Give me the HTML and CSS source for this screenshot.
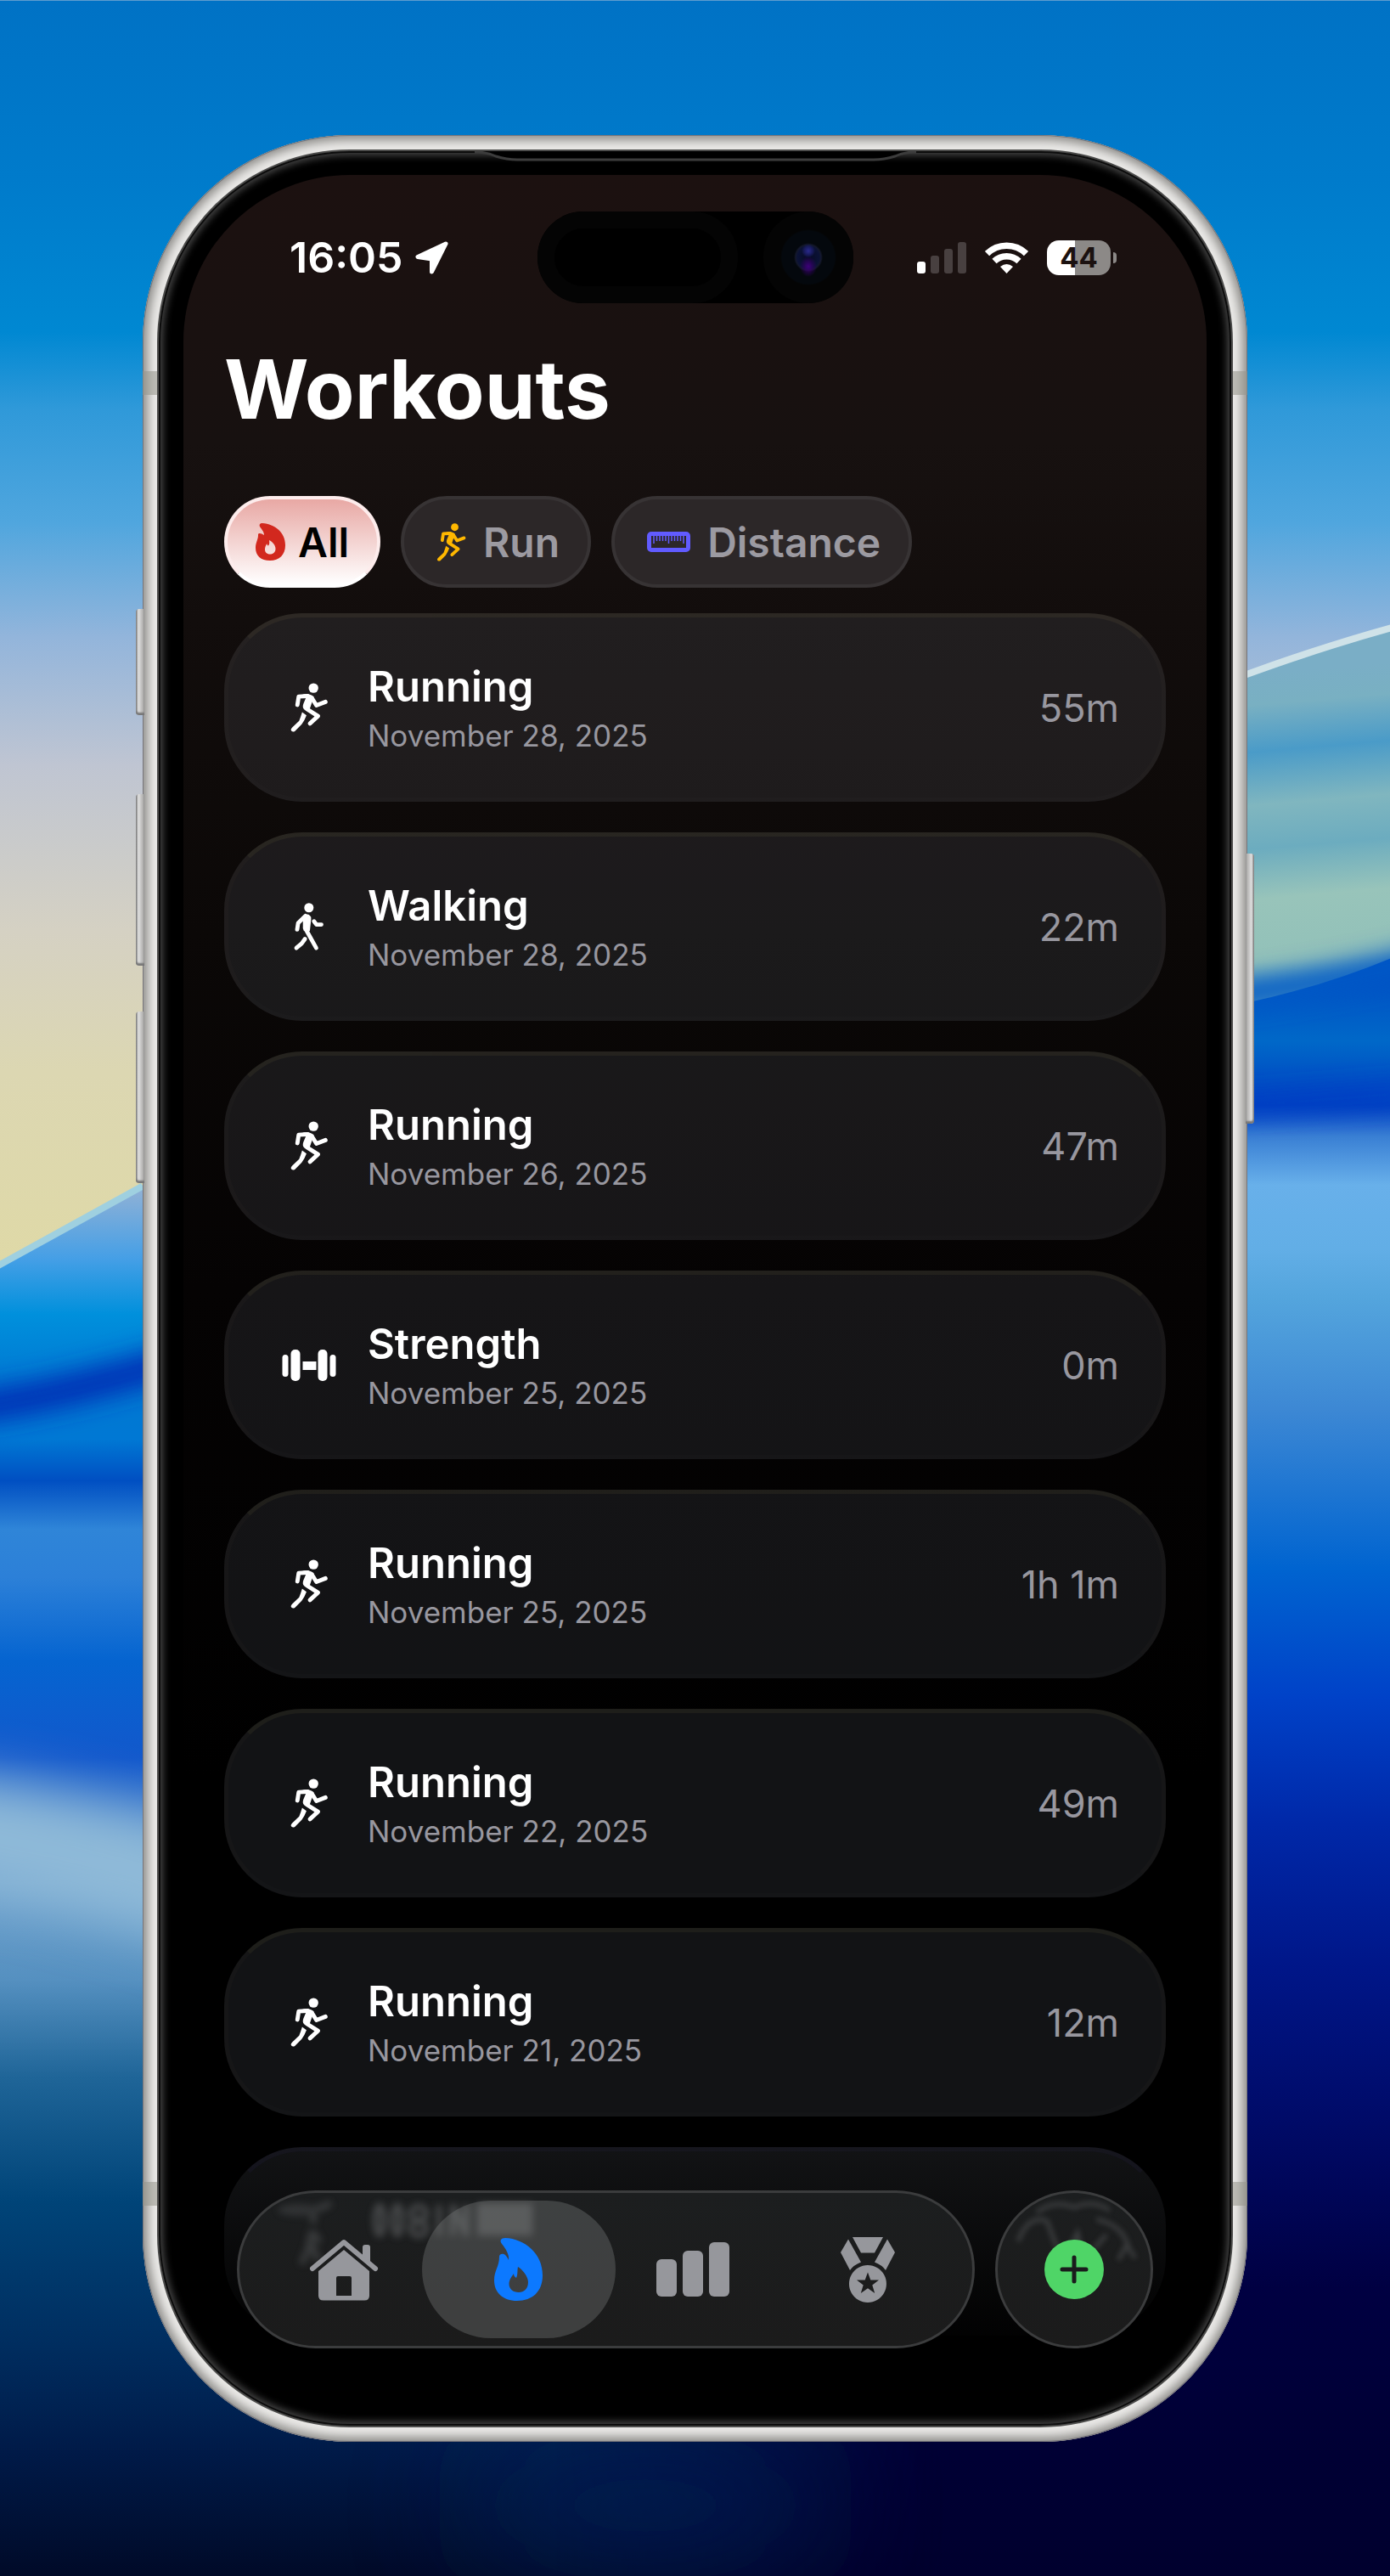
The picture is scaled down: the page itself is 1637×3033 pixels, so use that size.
FILE: index.html
```html
<!DOCTYPE html>
<html lang="en">
<head>
<meta charset="utf-8">
<meta name="viewport" content="width=device-width, initial-scale=1">
<title>Workouts</title>
<link rel="stylesheet" href="styles.css">
</head>
<body>
<svg class="wallpaper" viewBox="0 0 1637 3033" preserveAspectRatio="none" aria-hidden="true">
  <defs>
    <linearGradient id="sky" gradientUnits="userSpaceOnUse" x1="0" y1="0" x2="0" y2="1500">
      <stop offset="0" stop-color="#0072c5"/><stop offset=".14" stop-color="#007bcb"/><stop offset=".26" stop-color="#0088d2"/>
      <stop offset=".32" stop-color="#2f99d9"/><stop offset=".41" stop-color="#50a6de"/><stop offset=".5" stop-color="#93b5db"/>
      <stop offset=".6" stop-color="#bfc5d2"/><stop offset=".73" stop-color="#d5d1c3"/><stop offset=".84" stop-color="#dcd7b2"/><stop offset="1" stop-color="#dfd9a6"/>
    </linearGradient>
    <linearGradient id="seaLeft" gradientUnits="userSpaceOnUse" x1="0" y1="1400" x2="0" y2="3033">
      <stop offset="0" stop-color="#8fb1d6"/><stop offset=".05" stop-color="#459fe6"/><stop offset=".09" stop-color="#0090dc"/>
      <stop offset=".14" stop-color="#0078d2"/><stop offset=".18" stop-color="#0078d4"/><stop offset=".21" stop-color="#004fc2"/>
      <stop offset=".245" stop-color="#2f85d8"/><stop offset=".28" stop-color="#2c80d8"/><stop offset=".34" stop-color="#0564d0"/>
      <stop offset=".41" stop-color="#1258cc"/><stop offset=".5" stop-color="#6fa2ce"/><stop offset=".57" stop-color="#5590c0"/><stop offset=".64" stop-color="#1f6598"/>
      <stop offset=".73" stop-color="#004478"/><stop offset=".83" stop-color="#002e60"/><stop offset=".91" stop-color="#001a48"/><stop offset="1" stop-color="#000a28"/>
    </linearGradient>
    <linearGradient id="seaRight" gradientUnits="userSpaceOnUse" x1="0" y1="1150" x2="0" y2="3033">
      <stop offset="0" stop-color="#0050c4"/><stop offset=".04" stop-color="#0068c8"/><stop offset=".08" stop-color="#0040c2"/>
      <stop offset=".1" stop-color="#3a80d4"/><stop offset=".13" stop-color="#68b0ea"/><stop offset=".17" stop-color="#62aee6"/>
      <stop offset=".2" stop-color="#54a5dd"/><stop offset=".27" stop-color="#3d88d4"/><stop offset=".37" stop-color="#0064d0"/>
      <stop offset=".45" stop-color="#0042c8"/><stop offset=".53" stop-color="#0028a8"/><stop offset=".62" stop-color="#001688"/>
      <stop offset=".72" stop-color="#000a66"/><stop offset=".82" stop-color="#000042"/><stop offset=".9" stop-color="#000036"/><stop offset="1" stop-color="#00002e"/>
    </linearGradient>
    <linearGradient id="dune" gradientUnits="userSpaceOnUse" x1="1469" y1="793" x2="1500" y2="1160">
      <stop offset="0" stop-color="#7aaec6"/><stop offset=".1" stop-color="#79b0c2"/><stop offset=".25" stop-color="#4a9bc8"/>
      <stop offset=".42" stop-color="#80b6bf"/><stop offset=".56" stop-color="#6cacbf"/><stop offset=".72" stop-color="#98c4ba"/>
      <stop offset=".92" stop-color="#92c1b9"/><stop offset="1" stop-color="#6fb0bf"/>
    </linearGradient>
    <linearGradient id="fadeX" x1="0" x2="1" y1="0" y2="0">
      <stop offset=".4" stop-color="#000"/><stop offset=".68" stop-color="#fff"/>
    </linearGradient>
    <mask id="rightSide" maskUnits="userSpaceOnUse" x="0" y="0" width="1637" height="3033"><rect width="1637" height="3033" fill="url(#fadeX)"/></mask>
    <filter id="soft" filterUnits="userSpaceOnUse" x="-200" y="900" width="2100" height="1000"><feGaussianBlur stdDeviation="14"/></filter>
    <filter id="softer" filterUnits="userSpaceOnUse" x="-300" y="1700" width="2200" height="1500"><feGaussianBlur stdDeviation="32"/></filter>
    <filter id="haze" filterUnits="userSpaceOnUse" x="0" y="2400" width="1637" height="900"><feGaussianBlur stdDeviation="70"/></filter>
  </defs>
  <rect width="1637" height="3033" fill="url(#sky)"/>
  <path d="M0 1490L168 1395L800 1100H1637V3033H0Z" fill="url(#seaLeft)"/>
  <path d="M-60 1660Q60 1650 260 1585" fill="none" stroke="#0030b6" stroke-width="38" filter="url(#soft)"/>
  <path d="M-100 2150Q80 2170 320 2250" fill="none" stroke="#8fbad8" stroke-width="130" filter="url(#softer)"/>
  <path d="M-10 1494L168 1396" stroke="#9fd0e0" stroke-width="8"/>
  <path d="M1000 600H1637V1150H1000Z" fill="url(#sky)"/>
  <path d="M1000 960L1469 793Q1560 760 1637 738V1300H1000Z" fill="url(#dune)"/>
  <g mask="url(#rightSide)">
    <path d="M500 1180H1469Q1560 1160 1637 1128V3033H500Z" fill="url(#seaRight)"/>
  </g>
  <path d="M1300 1184Q1500 1174 1680 1128" stroke="#0058c6" stroke-width="32" fill="none" filter="url(#soft)"/>
  <path d="M1400 1304Q1500 1300 1660 1286" stroke="#0040c4" stroke-width="22" fill="none" filter="url(#soft)"/>
  <path d="M1440 803L1469 793Q1560 760 1640 738" stroke="#cfe2e8" stroke-width="8" fill="none"/>
  <ellipse cx="760" cy="2950" rx="220" ry="70" fill="#00205c" opacity=".7" filter="url(#haze)"/>
</svg>

<svg class="sprite" aria-hidden="true">
  <symbol id="i-run" viewBox="0 0 43 57">
    <circle cx="26.6" cy="6" r="5.6" fill="currentColor"/>
    <path d="M14 13.500C19 12.500 24 13 27 16L24 25L22 31L16 31C14 29 14 27 15 24L18 17Z" fill="currentColor"/>
    <path d="M8 25.500L9.500 15.800L20 15.200M25 18L30 26L40.500 22M18.500 30L31.800 38.500L22.500 47" fill="none" stroke="currentColor" stroke-width="4.800" stroke-linecap="round" stroke-linejoin="round"/>
    <path d="M13.500 34L18.500 37.500Q16 44 13 48L5 56Q1.500 57.500 .5 54.500Q.4 53 2 51.500L10 44Q12 39 13.500 34Z" fill="currentColor"/>
  </symbol>
  <symbol id="i-walk" viewBox="0 1 39 60">
    <circle cx="19.300" cy="8" r="5.700" fill="currentColor"/>
    <path d="M12 18Q17 14.500 20.500 17.500Q22.500 19 22 22L20.500 36Q17 40 13 36Q11.500 34 12 30Z" fill="currentColor"/>
    <path d="M15 18L6.200 26.500L5 34.500M25.500 24.500L28.500 28.500H34.500M17 37L28.200 57M14.500 46L10.500 51.500L4 57" fill="none" stroke="currentColor" stroke-width="5" stroke-linecap="round" stroke-linejoin="round"/>
  </symbol>
  <symbol id="i-strength" viewBox="0 0 63 37">
    <g fill="currentColor"><rect y="6" width="7" height="26" rx="3.500"/><rect x="10" width="11" height="37" rx="5"/><rect x="24" y="14" width="16" height="10"/><rect x="42" width="11" height="37" rx="5"/><rect x="56" y="6" width="7" height="26" rx="3.500"/></g>
  </symbol>
  <symbol id="i-flame" viewBox="0 0 57 74">
    <path fill="currentColor" fill-rule="evenodd" d="M13 0C36 1 57 18 57 44C57 63 45 74 27 74C10 74 0 64 0 50C0 38 6 34 6 22C6 18 11 18 13 20C15 22 16 24 17 26C18 20 14 13 9 7C6 3 8 0 13 0ZM28 34C27 39 28 43 26 47C24 46 23 44 23 42C21 45 17.500 49 17.500 54C17.500 60 22 64 29 64C35 64 40 60 40 52C40 45 33 37 28 34Z"/>
  </symbol>
  <symbol id="i-flame-wide" viewBox="0 0 35 44">
    <path fill="currentColor" fill-rule="evenodd" d="M8 0C23 1 35 11 35 26C35 37 28 44 17 44C6 44 0 38 0 29C0 22 3.500 19 3 13C4 11 7 12 10 14C10 10 7 7 5 4C4 2 5 0 8 0ZM16 20C16 22 17 24 15 26.500C13.500 26 13.500 25 13.500 24C12 26 11 28 11 31C11 34 13 36.500 17 36.500C21 36.500 23.500 34 23.500 30C23.500 26 20 22 16 20Z"/>
  </symbol>
  <symbol id="i-ruler" viewBox="0 0 51 24">
    <rect x="2.500" y="2.500" width="46" height="19" rx="2.500" fill="none" stroke="currentColor" stroke-width="5"/>
    <path d="M8 4V14M11.500 4V11M15 4V11M18.500 4V11M22 4V11M25.500 4V14M29 4V11M32.500 4V11M36 4V11M39.500 4V11M43 4V14" stroke="currentColor" stroke-width="1.500"/>
  </symbol>
  <symbol id="i-home" viewBox="0 0 82 73">
    <path fill="none" stroke="currentColor" stroke-width="6" stroke-linecap="round" stroke-linejoin="round" d="M4 35L41 4L78 35"/>
    <path fill="currentColor" d="M63 20V10Q63 7 66 7H69Q72 7 72 10V27ZM41 13L71 38V67Q71 72.500 65 72.500H17Q11 72.500 11 67V38ZM34 44Q32 44 32 46V67H50V46Q50 44 48 44Z" fill-rule="evenodd"/>
  </symbol>
  <symbol id="i-bars" viewBox="0 0 86 64">
    <g fill="currentColor"><rect y="20" width="24" height="44" rx="6"/><rect x="31" y="10" width="24" height="54" rx="6"/><rect x="62" width="24" height="64" rx="6"/></g>
  </symbol>
  <symbol id="i-medal" viewBox="0 0 64 77">
    <path fill="currentColor" d="M14 0H50L40 18.500H24ZM9 2.500L24 29.500Q15 33 11 39L0 18ZM55 2.500L40 29.500Q49 33 53 39L64 18Z"/>
    <path fill="currentColor" fill-rule="evenodd" d="M32 33A22 22 0 1 1 31.900 33ZM32 41.500L28.700 50.500H19L26.700 56.500L23.800 66L32 60.200L40.200 66L37.300 56.500L45 50.500H35.300Z"/>
  </symbol>
</svg>

<main class="phone">
  <span class="key key-action"></span>
  <span class="key key-up"></span>
  <span class="key key-down"></span>
  <span class="key key-power"></span>
  <span class="antenna antenna-top"></span>
  <span class="antenna antenna-bottom"></span>
  <div class="bezel">
    <svg class="earpiece" viewBox="0 0 520 24" preserveAspectRatio="none" aria-hidden="true">
      <path d="M0 0H520Q505 1 495 5Q482 9 470 9H50Q38 9 25 5Q15 1 0 0Z" fill="#000"/>
      <path d="M0 1Q15 1 25 6Q38 10 50 10H470Q482 10 495 6Q505 1 520 1" fill="none" stroke="#3c3c3c" stroke-width="3"/>
    </svg>
    <div class="screen">
      <header class="status">
        <div class="status-left">
          <time>16:05</time>
          <svg class="arrow" viewBox="0 0 39 39" role="img" aria-label="Location in use"><path d="M36 3L3 18.500L19.500 21V36Z" fill="#fff" stroke="#fff" stroke-width="5" stroke-linejoin="round"/></svg>
        </div>
        <div class="island"><span class="sensor"></span><span class="camera"></span></div>
        <div class="status-right">
          <svg class="signal" viewBox="0 0 58 37" role="img" aria-label="Signal"><rect y="23" width="10" height="14" rx="3" fill="#fff"/><g fill="#484040"><rect x="16" y="16" width="10" height="21" rx="3"/><rect x="32" y="8" width="10" height="29" rx="3"/><rect x="48" width="10" height="37" rx="3"/></g></svg>
          <svg class="wifi" viewBox="0 0 51 37" role="img" aria-label="Wi-Fi"><g fill="none" stroke="#fff" stroke-width="7.500"><path d="M2.500 13.500A33 33 0 0 1 48.500 13.500"/><path d="M11 22.500A21 21 0 0 1 40 22.500"/></g><path d="M25.500 37L18 29Q25.500 23 33 29Z" fill="#fff"/></svg>
          <div class="battery"><span class="battery-level">44</span></div>
        </div>
      </header>

      <h1>Workouts</h1>

      <div class="filters">
        <button class="chip chip-on" type="button"><svg class="chip-flame"><use href="#i-flame-wide"/></svg>All</button>
        <button class="chip chip-run" type="button"><svg class="chip-runner"><use href="#i-run"/></svg>Run</button>
        <button class="chip chip-distance" type="button"><svg class="chip-ruler"><use href="#i-ruler"/></svg>Distance</button>
      </div>

      <ul class="workouts">
        <li class="workout"><svg class="kind"><use href="#i-run"/></svg><div class="info"><h2>Running</h2><p>November 28, 2025</p></div><span class="duration">55m</span></li>
        <li class="workout"><svg class="kind"><use href="#i-walk"/></svg><div class="info"><h2>Walking</h2><p>November 28, 2025</p></div><span class="duration">22m</span></li>
        <li class="workout"><svg class="kind"><use href="#i-run"/></svg><div class="info"><h2>Running</h2><p>November 26, 2025</p></div><span class="duration">47m</span></li>
        <li class="workout"><svg class="kind kind-strength"><use href="#i-strength"/></svg><div class="info"><h2>Strength</h2><p>November 25, 2025</p></div><span class="duration">0m</span></li>
        <li class="workout"><svg class="kind"><use href="#i-run"/></svg><div class="info"><h2>Running</h2><p>November 25, 2025</p></div><span class="duration">1h 1m</span></li>
        <li class="workout"><svg class="kind"><use href="#i-run"/></svg><div class="info"><h2>Running</h2><p>November 22, 2025</p></div><span class="duration">49m</span></li>
        <li class="workout"><svg class="kind"><use href="#i-run"/></svg><div class="info"><h2>Running</h2><p>November 21, 2025</p></div><span class="duration">12m</span></li>
        <li class="workout workout-last"></li>
      </ul>

      <div class="dock">
        <nav class="tabs" aria-label="Main">
          <svg class="ghost" viewBox="0 0 360 100" aria-hidden="true">
            <g fill="none" stroke="#77797b" stroke-width="7"><ellipse cx="90" cy="32" rx="5" ry="17"/><ellipse cx="111" cy="32" rx="5" ry="17"/><ellipse cx="136" cy="24" rx="9" ry="8"/><ellipse cx="136" cy="42" rx="9" ry="8"/><path d="M160 14V50M176 50V14L192 50V14"/></g>
            <rect x="205" y="12" width="65" height="38" fill="#7b7d7f"/>
            <path d="M12 27Q5 18 20 18L33 12M12 20V36M10 45L6 66L-2 84M10 45L20 58M10 60L18 80" fill="none" stroke="#5c5e60" stroke-width="8"/><ellipse cx="-6" cy="20" rx="24" ry="7" fill="#4c4e50"/>
          </svg>
          <a class="tab" href="#home" aria-label="Home"><svg class="tab-home"><use href="#i-home"/></svg></a>
          <a class="tab tab-on" href="#workouts" aria-label="Workouts" aria-current="page"><svg class="tab-flame"><use href="#i-flame"/></svg></a>
          <a class="tab" href="#stats" aria-label="Statistics"><svg class="tab-bars"><use href="#i-bars"/></svg></a>
          <a class="tab" href="#awards" aria-label="Awards"><svg class="tab-medal"><use href="#i-medal"/></svg></a>
        </nav>
        <button class="add" type="button" aria-label="Add workout">
          <svg class="ghost-arc" viewBox="0 0 160 80" aria-hidden="true"><g fill="none" stroke="#626466" stroke-width="5"><path d="M14 52Q26 20 48 28L60 60M36 18Q56 2 80 12Q104 2 122 16M106 26Q136 32 144 58M118 44L104 60M132 74L142 56L152 72M74 62L84 42L88 62"/></g></svg>
          <svg class="plus" viewBox="0 0 70 70"><circle cx="35" cy="35" r="35" fill="#4fd567"/><path d="M35 21V49M21 35H49" stroke="#1a1c1c" stroke-width="5" stroke-linecap="round"/></svg>
        </button>
      </div>
    </div>
  </div>
</main>
</body>
</html>
```

FILE: styles.css
```css
* {
  box-sizing: border-box;
}

body {
  margin: 0;
  min-height: 100vh;
  position: relative;
  padding: 159px 168px 158px;
  background: #0072c5;
  color: #fff;
  font-family: Inter, "Liberation Sans", sans-serif;
  overflow-x: hidden;
}

.wallpaper {
  position: absolute;
  inset: 0;
  width: 100%;
  height: 100%;
  border-top: 1px solid #5d9ccf;
}

.sprite {
  display: none;
}

/* Phone body */
.phone {
  position: relative;
  padding: 17px;
  border-radius: 244px;
  background: #ebeae8;
  box-shadow: inset 0 0 0 1px #77757a, inset 0 0 12px 6px #8d8c89;
}

.bezel {
  position: relative;
  padding: 28px 29px;
  border: 2px solid #4c4c4b;
  border-radius: 227px;
  background: #000;
  box-shadow: inset 0 0 0 2px #0c0c0c, inset 0 0 8px 5px #464646;
}

.key {
  position: absolute;
  left: -8px;
  width: 10px;
  border-radius: 4px 0 0 4px;
  background: linear-gradient(90deg, #777, #e0e0e0 30%, #a5a4a2);
  box-shadow: inset 0 -3px 2px #777;
}

.key-action {
  top: 558px;
  height: 125px;
}

.key-up {
  top: 776px;
  height: 202px;
}

.key-down {
  top: 1032px;
  height: 202px;
}

.key-power {
  top: 846px;
  height: 318px;
  right: -8px;
  left: auto;
  border-radius: 0 4px 4px 0;
  background: linear-gradient(270deg, #777, #e0e0e0 30%, #a5a4a2);
}

.antenna {
  position: absolute;
  left: 0;
  right: 0;
  height: 28px;
  background: rgba(150, 150, 138, .55);
}

.antenna-top {
  top: 278px;
}

.antenna-bottom {
  bottom: 278px;
}

.earpiece {
  position: absolute;
  top: 0;
  left: 50%;
  width: 520px;
  height: 24px;
  margin-left: -260px;
}

/* Display */
.screen {
  position: relative;
  aspect-ratio: 1205 / 2622;
  overflow: hidden;
  border-radius: 196px;
  background: linear-gradient(#1c1110, #171110 12%, #120d0c 20%, #0b0807 34%, #050303 50%, #000 72%);
}

.status {
  display: flex;
  align-items: center;
  justify-content: space-between;
  height: 194px;
  padding: 0 106px 0 125px;
}

.status-left,
.status-right {
  display: flex;
  align-items: center;
}

.status-left {
  gap: 14px;
  font-size: 50px;
  font-weight: 600;
  line-height: 60px;
}

.arrow {
  width: 39px;
  height: 39px;
}

.island {
  position: absolute;
  left: 50%;
  top: 43px;
  width: 372px;
  height: 108px;
  margin-left: -186px;
  border-radius: 54px;
  background: #000;
}

.sensor {
  position: absolute;
  left: 0;
  top: 0;
  width: 236px;
  height: 108px;
  border: 20px solid #040404;
  border-radius: 54px;
}

.camera {
  position: absolute;
  right: 0;
  top: 0;
  width: 106px;
  height: 108px;
  border-radius: 54px;
  background:
    radial-gradient(circle at 50% 43%, #2a2a8c 0, rgba(34, 34, 120, .6) 5px, transparent 8px),
    radial-gradient(ellipse at 50% 60%, #3d0078 0, rgba(50, 0, 100, .5) 6px, transparent 10px),
    radial-gradient(circle at 50% 50%, #070a24 0, #0b1236 13px, #14182c 15px, #04080d 17px, #04080d 31px, #040404 33px);
}

.status-right {
  gap: 22px;
}

.signal {
  width: 58px;
  height: 37px;
}

.wifi {
  width: 51px;
  height: 37px;
}

.battery {
  position: relative;
  width: 75px;
  height: 41px;
  margin-right: 7px;
  border-radius: 14px;
  background: linear-gradient(90deg, #fff 44%, #8c8987 44%);
  color: #1b1110;
  font-size: 33px;
  font-weight: 700;
  line-height: 41px;
  text-align: center;
}

.battery::after {
  content: "";
  position: absolute;
  right: -7px;
  top: 14px;
  width: 4px;
  height: 13px;
  border-radius: 0 4px 4px 0;
  background: #8c8987;
}

h1,
h2,
p {
  margin: 0;
}

h1 {
  padding: 0 48px;
  font-size: 96px;
  font-weight: 700;
  line-height: 116px;
}

.filters {
  display: flex;
  gap: 24px;
  padding: 68px 48px 0;
}

.chip {
  display: flex;
  align-items: center;
  gap: 15px;
  height: 108px;
  padding: 0 33px;
  border: 4px solid #373334;
  border-radius: 54px;
  background: #2c2728;
  color: #9c9aa1;
  font: inherit;
  font-size: 48px;
  font-weight: 600;
}

.chip-on {
  border-color: #fdecec;
  border-bottom-color: #fff;
  background: linear-gradient(#e8a8a4, #fff);
  color: #000;
}

.chip-flame {
  width: 35px;
  height: 44px;
  color: #d2281e;
}

.chip-runner {
  width: 35px;
  height: 45px;
  margin: 0 5px;
  color: #ffb800;
}

.chip-ruler {
  width: 51px;
  height: 24px;
  margin: 0 5px;
  color: #615bff;
}

.workouts {
  display: flex;
  flex-direction: column;
  gap: 36px;
  margin: 0;
  padding: 30px 48px 0;
  list-style: none;
}

.workout {
  display: flex;
  align-items: center;
  flex: none;
  height: 222px;
  padding: 0 50px 0 43px;
  border: 5px solid rgba(255, 230, 150, .02);
  border-top-color: rgba(255, 225, 130, .05);
  border-bottom-color: rgba(255, 255, 255, .01);
  border-radius: 92px;
  background: rgba(150, 158, 172, .12);
}

.workout-last {
  border-color: rgba(90, 80, 220, .05) transparent transparent;
  background: linear-gradient(rgba(150, 158, 172, .12), rgba(150, 158, 172, .01)) border-box;
}

.kind {
  width: 104px;
  height: 58px;
}

.kind-strength {
  height: 37px;
}

.info {
  flex: 1;
  padding-left: 17px;
}

h2 {
  font-size: 49px;
  font-weight: 600;
  line-height: 66px;
}

p {
  color: #98979f;
  font-size: 35px;
  line-height: 48px;
}

.duration {
  color: #98979f;
  font-size: 45px;
}

/* Floating tab bar */
.dock {
  position: absolute;
  left: 63px;
  right: 63px;
  bottom: 63px;
  display: flex;
  gap: 24px;
}

.tabs {
  position: relative;
  display: grid;
  grid-template-columns: repeat(4, 1fr);
  flex: 1;
  height: 186px;
  padding: 9px 20px;
  border: 3px solid #3b3c3d;
  border-radius: 93px;
  background: linear-gradient(#1c1e1f, #1b1b1b);
  overflow: hidden;
}

.ghost {
  position: absolute;
  left: 75px;
  top: 0;
  width: 360px;
  height: 100px;
  overflow: visible;
  opacity: .45;
  filter: blur(4px);
}

.tab {
  position: relative;
  display: grid;
  place-items: center;
  margin: 0 -11px;
  border-radius: 81px;
  color: #96979c;
}

.tab-on {
  background: rgba(125, 127, 127, .36);
  color: #0c79ff;
}

.tab-home {
  width: 82px;
  height: 73px;
}

.tab-flame {
  width: 57px;
  height: 74px;
}

.tab-bars {
  width: 86px;
  height: 64px;
}

.tab-medal {
  width: 64px;
  height: 77px;
}

.add {
  position: relative;
  display: grid;
  place-items: center;
  width: 186px;
  height: 186px;
  padding: 0;
  border: 3px solid #3b3c3d;
  border-radius: 50%;
  background: linear-gradient(#1c1e1f, #1b1b1b);
}

.ghost-arc {
  position: absolute;
  left: 10px;
  top: 5px;
  width: 160px;
  height: 80px;
  opacity: .45;
  filter: blur(3px);
}

.plus {
  position: relative;
  width: 70px;
  height: 70px;
}
```
